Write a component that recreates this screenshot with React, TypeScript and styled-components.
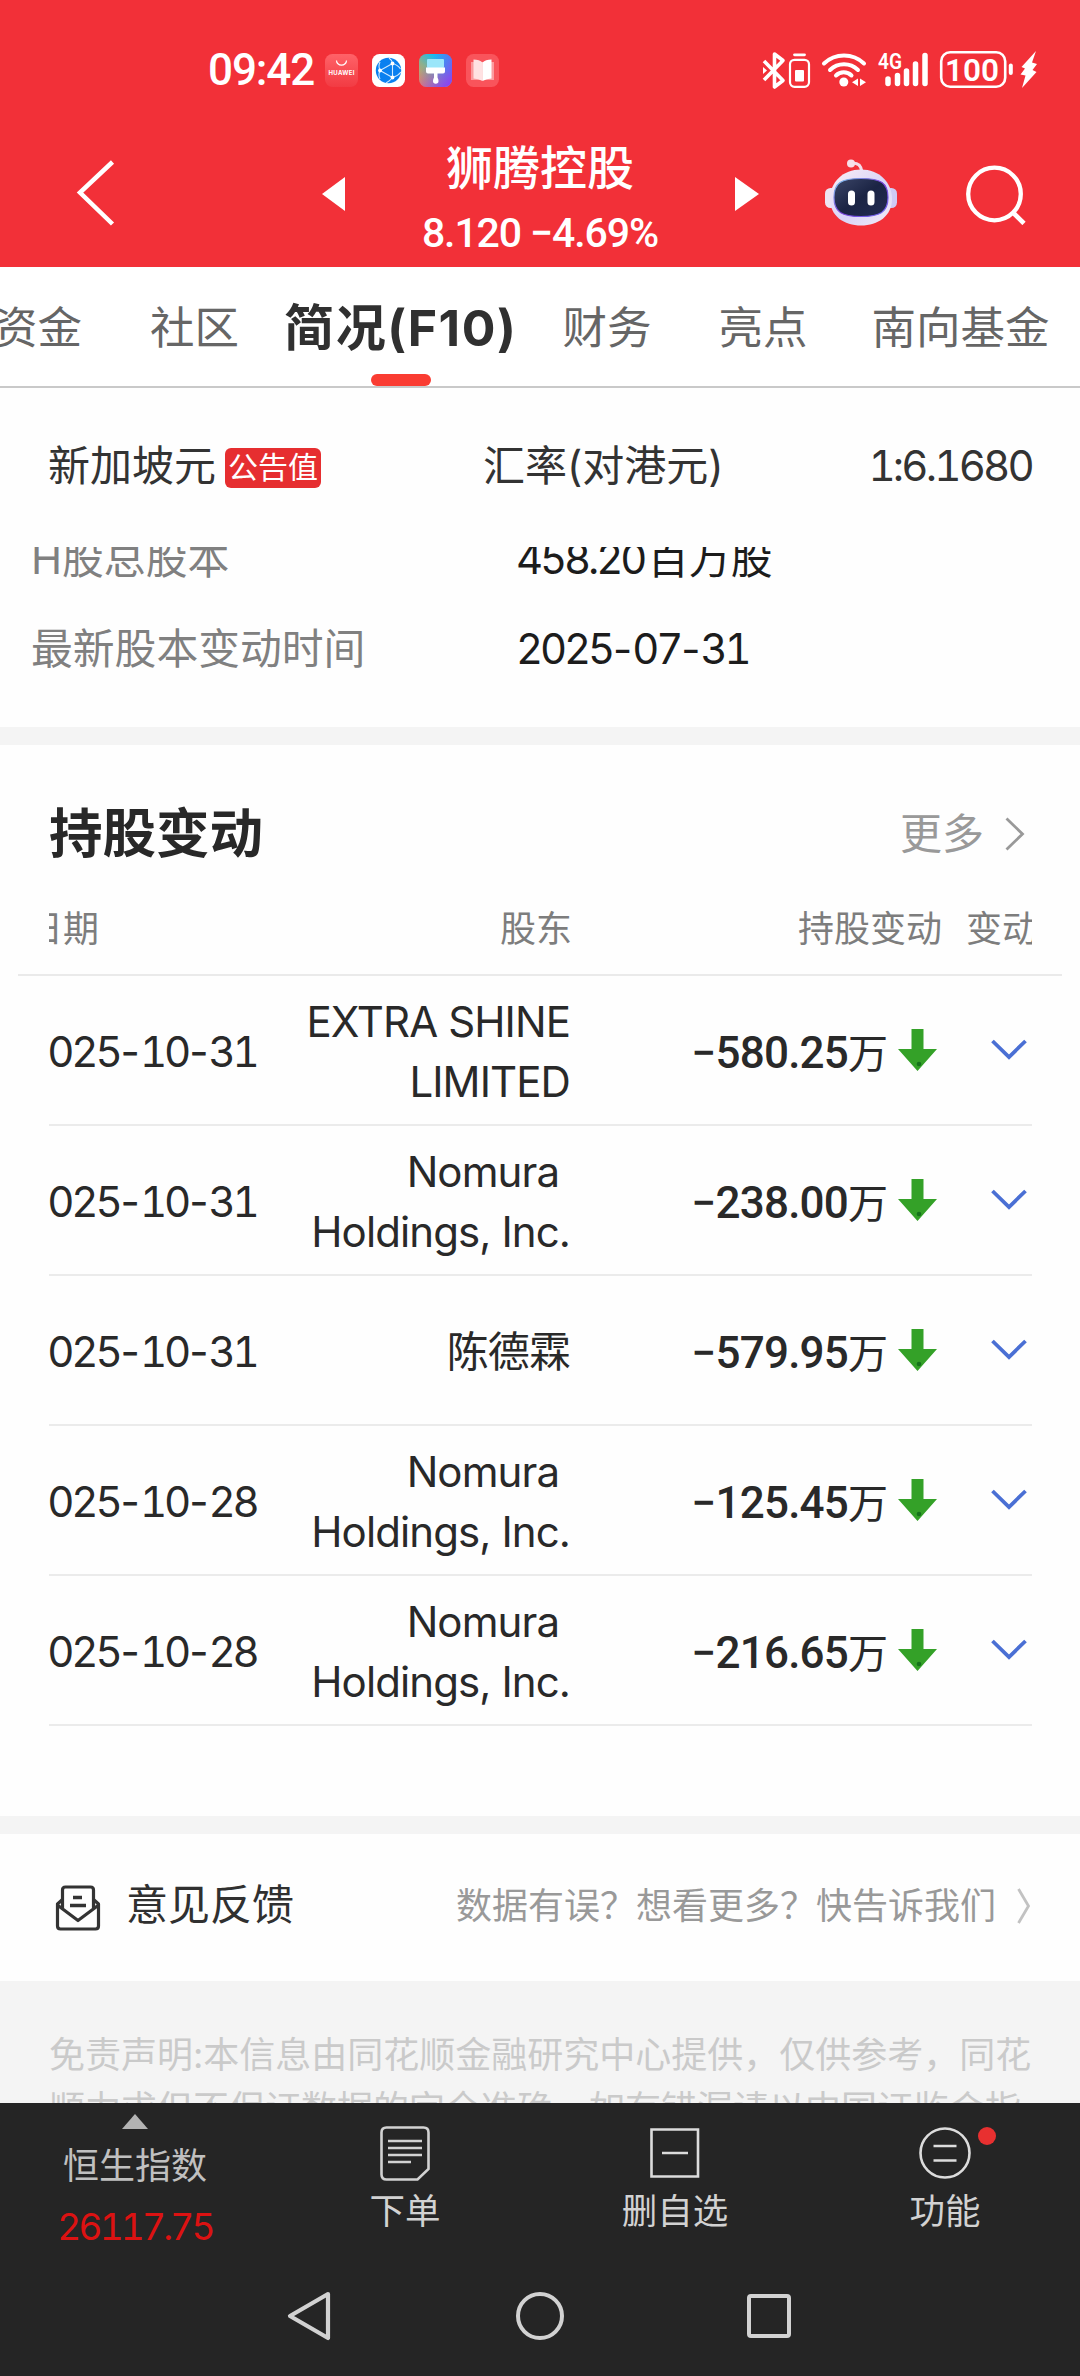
import React from "react";
import styled, { createGlobalStyle, css } from "styled-components";

const sans = `Inter, "Noto Sans CJK SC", sans-serif`;
const din = `Roboto, "Noto Sans CJK SC", sans-serif`;

const GlobalStyle = createGlobalStyle`
  * { box-sizing: border-box; }
  body { margin: 0; background: #fff; }
  svg { display: block; flex: none; }
`;

const Screen = styled.div`
  width: 1080px;
  height: 2376px;
  display: flex;
  flex-direction: column;
  overflow: hidden;
  background: #fefefe;
  font-family: ${sans};
  color: #2b2b2b;
  white-space: nowrap;
`;

/* Evenly spaced digits for dates, rates and amounts */
const Num = styled.span`
  font-variant-numeric: tabular-nums;
  letter-spacing: -3.1px;
`;
const Dash = styled.span`
  font-variant-numeric: normal;
  letter-spacing: 0;
  margin: 0 0 0 1px;
`;

/* ---------- status bar ---------- */
const StatusBar = styled.div`
  height: 120px;
  padding: 20px 42px 0 208px;
  display: flex;
  align-items: center;
  background: #f23038;
  color: #fff;
`;
const Clock = styled.span`
  width: 117px;
  font: 500 44px/48px ${din};
  letter-spacing: -1.1px;
`;
const AppIcons = styled.div`
  display: flex;
  gap: 14px;
`;
const StatusIcons = styled.div`
  margin-left: auto;
  display: flex;
`;

/* ---------- header ---------- */
const Header = styled.header`
  height: 147px;
  display: flex;
  align-items: center;
  background: #f23038;
  color: #fff;
`;
const HeaderIcon = styled.span<{ $gap: number }>`
  display: block;
  margin-left: ${(p) => p.$gap}px;
`;
const StockTitle = styled.div`
  width: 300px;
  margin-left: 45px;
  display: flex;
  flex-direction: column;
  align-items: center;
  gap: 8px;
  padding-bottom: 2px;
  padding-top: 13px;
`;
const StockName = styled.span`
  font: 500 47px/60px "Noto Sans CJK SC", sans-serif;
`;
const StockQuote = styled.span`
  font: 500 41px/60px ${din};
  letter-spacing: -1.1px;
`;

/* ---------- tabs ---------- */
const Tabs = styled.nav`
  height: 121px;
  display: flex;
  border-bottom: 2px solid #c9c9c9;
  background: #fff;
`;
const Tab = styled.div<{ $gap: number; $active?: boolean }>`
  position: relative;
  flex: none;
  margin-left: ${(p) => p.$gap}px;
  font-size: 44.5px;
  line-height: 122px;
  color: #666;
  ${(p) =>
    p.$active &&
    css`
      font-size: 50px;
      font-weight: 700;
      color: #303030;
      letter-spacing: 1.6px;
      &::after {
        content: "";
        position: absolute;
        left: calc(50% - 30px);
        bottom: 0;
        width: 60px;
        height: 12px;
        border-radius: 6px;
        background: #fa3c32;
      }
    `}
`;

/* ---------- currency row ---------- */
const CurrencyRow = styled.div`
  height: 159px;
  padding: 0 48px 4px;
  display: flex;
  align-items: center;
  font-size: 42px;
  line-height: 60px;
  color: #333;
`;
const CurrencyName = styled.div`
  width: 435px;
  display: flex;
  align-items: center;
  gap: 9px;
`;
const Badge = styled.span`
  height: 40px;
  padding: 0 3px;
  margin-top: 4px;
  border-radius: 6px;
  background: #e62e30;
  color: #fff;
  font-size: 30px;
  line-height: 38px;
`;
const Rate = styled(Num)`
  margin-left: auto;
  letter-spacing: -2.8px;
`;

/* ---------- share capital ---------- */
const Capital = styled.div`
  height: 180px;
  overflow: hidden;
`;
const CapitalRow = styled.div<{ $first?: boolean }>`
  height: 90px;
  margin-top: ${(p) => (p.$first ? -33 : 0)}px;
  padding-left: 31px;
  display: grid;
  grid-template-columns: 485px 1fr;
  align-items: center;
  font-size: 41.8px;
  line-height: 60px;
  color: #808080;
`;
const CapitalValue = styled.span`
  color: #1c1c1c;
`;
const ShareCount = styled(Num)`
  margin-right: 3px;
`;
const Divider = styled.div`
  flex: none;
  height: 18px;
  background: #f4f4f4;
`;

/* ---------- holdings ---------- */
const Holdings = styled.section`
  height: 1071px;
`;
const SectionHead = styled.div`
  height: 143px;
  padding: 35px 54px 0 49px;
  display: flex;
  align-items: center;
  justify-content: space-between;
`;
const SectionTitle = styled.h2`
  margin: 0;
  font-size: 53.5px;
  line-height: 60px;
  font-weight: 700;
  color: #282828;
`;
const More = styled.span`
  display: flex;
  align-items: center;
  gap: 20px;
  font-size: 42px;
  line-height: 60px;
  color: #999;
`;
const TableHead = styled.div`
  height: 88px;
  margin: 0 18px;
  padding: 0 30px 0 31px;
  border-bottom: 2px solid #eaeaea;
  color: #7d7d7d;
  font-size: 36px;
  line-height: 54px;
`;
const TableBody = styled.div`
  margin: 0 48px 0 49px;
`;
const Clip = styled.div`
  height: 100%;
  overflow: hidden;
`;
const Columns = styled.div`
  height: 100%;
  width: 1040px;
  margin-left: -22px;
  display: grid;
  grid-template-columns: 240px 303px 370px 1fr;
  align-items: center;
`;
const Row = styled.div`
  height: 150px;
  border-bottom: 2px solid #ebebeb;
  font-size: 42px;
  line-height: 60px;
  color: #292929;
`;
const HeadCell = styled.span<{ $align?: string }>`
  text-align: ${(p) => p.$align ?? "left"};
  padding-bottom: 4px;
  margin-right: -2px;
`;
const RatioHead = styled(HeadCell)`
  padding-left: 26px;
`;
const DateCell = styled(Num)`
  padding-top: 3px;
  margin-left: -4px;
`;
const HolderCell = styled.span`
  padding-top: 3px;
  text-align: right;
  white-space: pre;
  letter-spacing: -0.9px;
`;
const ChangeCell = styled.span`
  display: flex;
  align-items: center;
  justify-content: flex-end;
  gap: 10px;
  padding-right: 3px;
`;
const Amount = styled.span`
  padding-top: 7px;
  font-family: ${din};
`;
const Figure = styled.b`
  font-weight: 500;
  font-size: 44px;
  letter-spacing: -0.8px;
`;
const Unit = styled.span`
  font-size: 40px;
`;
const ExpandCell = styled.span`
  padding-left: 51px;
`;

/* ---------- feedback ---------- */
const Feedback = styled.div`
  height: 147px;
  padding: 0 48px 0 55px;
  display: flex;
  align-items: center;
  font-size: 42px;
  line-height: 60px;
  color: #303030;
`;
const FeedbackTitle = styled.span`
  margin: 0 0 5px 25px;
`;
const FeedbackHint = styled.span`
  margin: 0 0 4px auto;
  display: flex;
  align-items: center;
  gap: 20px;
  font-size: 36px;
  color: #999;
`;
const Disclaimer = styled.p`
  flex: 1;
  min-height: 0;
  margin: 0;
  padding: 47px 49px 0;
  overflow: hidden;
  background: #f4f4f4;
  color: #cacaca;
  font-size: 36px;
  line-height: 54px;
`;

/* ---------- bottom bars ---------- */
const BottomBar = styled.div`
  height: 153px;
  flex: none;
  display: grid;
  grid-template-columns: repeat(4, 270px);
  background: #252525;
  color: #d2d2d2;
  font-size: 35.5px;
  line-height: 44px;
`;
const IndexItem = styled.div`
  display: flex;
  flex-direction: column;
  align-items: center;
  padding-top: 11px;
  color: #c0c0c0;
`;
const IndexName = styled.span`
  margin-top: 15px;
  font-size: 36px;
`;
const IndexValue = styled(Num)`
  margin-top: 17px;
  color: #dc1212;
  font-size: 37px;
  letter-spacing: -2.8px;
`;
const Action = styled.div`
  position: relative;
  display: flex;
  flex-direction: column;
  align-items: center;
  padding-top: 20px;
`;
const ActionLabel = styled.span`
  margin-top: 7px;
`;
const Dot = styled.i`
  position: absolute;
  left: 168px;
  top: 24px;
  width: 18px;
  height: 18px;
  border-radius: 50%;
  background: #e83030;
`;
const SystemNav = styled.div`
  height: 120px;
  flex: none;
  display: flex;
  justify-content: center;
  align-items: center;
  gap: 180px;
  background: #252525;
`;

const GalleryIcon = () => (
  <svg width="33" height="33" viewBox="0 0 33 33">
    <defs>
      <linearGradient id="hw" x1="0" y1="0" x2="0" y2="1">
        <stop offset="0" stopColor="#ff6268" />
        <stop offset="1" stopColor="#f23b43" />
      </linearGradient>
    </defs>
    <rect width="33" height="33" rx="7.5" fill="url(#hw)" />
    <path d="M11.5 6.5a5 4.6 0 0 0 10 0" fill="none" stroke="#fff" strokeWidth="1.2" />
    <text x="16.5" y="21" fontSize="6" fontWeight="700" fontFamily="Inter, sans-serif" fill="#fff" textAnchor="middle" textLength="26">HUAWEI</text>
  </svg>
);
const GlobeIcon = () => (
  <svg width="33" height="33" viewBox="0 0 33 33">
    <rect width="33" height="33" rx="7.5" fill="#fff" />
    <circle cx="16.5" cy="16.5" r="12.7" fill="#0a80f0" />
    <g fill="none" stroke="#cfe8ff" strokeWidth="1.1">
      <path d="M8 16.5 20.5 9.5M8 16.5 20.5 23.5M20.5 9.5V23.5" />
      <path d="M20.5 9.5Q20 6 17 4M20.5 9.5Q26 11 28.5 15M8 16.5Q6 12 8 8M8 16.5Q6 21 8 25M20.5 23.5Q18 27 14 29M20.5 23.5Q26 22 29 18" />
    </g>
    <circle cx="8" cy="16.5" r="1.9" fill="#fff" />
    <circle cx="20.5" cy="9.5" r="1.9" fill="#fff" />
    <circle cx="20.5" cy="23.5" r="1.9" fill="#fff" />
  </svg>
);
const ThemeIcon = () => (
  <svg width="33" height="33" viewBox="0 0 33 33">
    <defs>
      <linearGradient id="th1" x1="0" y1="1" x2="1" y2="0">
        <stop offset="0" stopColor="#ff8a50" />
        <stop offset="0.4" stopColor="#8bb08e" />
        <stop offset="0.7" stopColor="#15bdf2" />
        <stop offset="1" stopColor="#2aa0f8" />
      </linearGradient>
      <linearGradient id="th2" x1="0.3" y1="0.2" x2="1" y2="0.8">
        <stop offset="0" stopColor="#9040f0" stopOpacity="0" />
        <stop offset="1" stopColor="#8a45f0" />
      </linearGradient>
    </defs>
    <rect width="33" height="33" rx="7.5" fill="url(#th1)" />
    <rect width="33" height="33" rx="7.5" fill="url(#th2)" />
    <rect x="8" y="5" width="17" height="9" rx="1" fill="#9be6fa" />
    <path d="M7 13.5h19v4q0 2-2 2h-5.500v4q1 1.500 1 3.500a2.500 2.500 0 0 1-5.500 0q0-2 1-3.500v-4H9q-2 0-2-2z" fill="#fff" />
  </svg>
);
const BookIcon = () => (
  <svg width="33" height="33" viewBox="0 0 33 33">
    <rect width="33" height="33" rx="7.500" fill="#f9545b" />
    <path d="M5 8h23v18H5z" fill="#fb9a9e" />
    <path d="M7.500 5.500q6 0 9 3v18.500q-4-2.500-9-2.500z" fill="#ffe1e2" />
    <path d="M25.500 5.500q-6 0-9 3v18.500q4-2.500 9-2.500z" fill="#fff" />
  </svg>
);

const StatusGlyphs = () => (
  <svg width="277" height="40" viewBox="760 49 277 40" fill="none" stroke="#fff">
    <path d="M763 60 782 79.500 773.500 86V53l8.500 6.500L763 79" strokeWidth="3.600" strokeLinejoin="round" />
    <path d="M762 66l4 3.500-4 3.500z" fill="#fff" stroke="none" />
    <path d="M793.500 53.800h10" strokeWidth="2.800" strokeLinecap="round" />
    <rect x="789" y="58.800" width="19" height="27" rx="4.500" strokeWidth="2.200" />
    <rect x="794" y="69" width="9" height="11.500" rx="1" fill="#fff" stroke="none" />
    <g strokeWidth="4" strokeLinecap="round">
      <path d="M823 62.500a29 29 0 0 1 40 0" />
      <path d="M829 69a20 20 0 0 1 28 0" />
      <path d="M835 74.500a11 11 0 0 1 15.500 0" />
    </g>
    <circle cx="842.800" cy="81" r="4.500" fill="#fff" stroke="none" />
    <path d="M857 77.500v7.500l-6-3.700zM859 77.500v7.500l6-3.700z" fill="#fff" stroke="none" />
    <text x="877" y="68" fontSize="22" fontWeight="600" fontFamily="Roboto, sans-serif" fill="#fff" stroke="none" textLength="24" lengthAdjust="spacingAndGlyphs">4G</text>
    <g strokeWidth="5.500" strokeLinecap="round">
      <path d="M887 78v4.500M896.500 74.500v8M905.500 70v12.500M914.500 63v19.500M924 54.500v28" />
    </g>
    <rect x="940.200" y="51.200" width="64" height="34.600" rx="9" strokeWidth="2.600" />
    <text x="944" y="80" fontSize="32" fontWeight="600" fontFamily="Roboto, sans-serif" fill="#fff" stroke="none" textLength="54" lengthAdjust="spacingAndGlyphs">100</text>
    <path d="M1009.800 64.500v7.500" strokeWidth="4" strokeLinecap="round" />
    <path d="M1035 50 1020.500 66l3.500 1.500-4.500 6 5 1-3.500 12.500L1035.500 71l-4-2 4.500-6-5-1.500z" fill="#fff" stroke="none" />
  </svg>
);

const Robot = () => (
  <svg width="78" height="72" viewBox="0 0 78 72">
    <defs>
      <linearGradient id="shell" x1="0" y1="0" x2="1" y2="1">
        <stop offset="0" stopColor="#fbeef4" />
        <stop offset="0.55" stopColor="#d9d4f8" />
        <stop offset="1" stopColor="#f3edf7" />
      </linearGradient>
      <linearGradient id="rim" x1="0" y1="0" x2="1" y2="1">
        <stop offset="0" stopColor="#7fd0ee" />
        <stop offset="0.5" stopColor="#7a3fd8" />
        <stop offset="1" stopColor="#6d6cf0" />
      </linearGradient>
      <linearGradient id="visor" x1="0" y1="0" x2="1" y2="1">
        <stop offset="0" stopColor="#3c4668" />
        <stop offset="0.5" stopColor="#1b2444" />
        <stop offset="1" stopColor="#222b52" />
      </linearGradient>
    </defs>
    <path d="M29 5q10-1 11 9" fill="none" stroke="#f4dbe8" strokeWidth="3" />
    <circle cx="29" cy="5.500" r="4" fill="#f7dfe9" />
    <rect x="3" y="30" width="12" height="20" rx="5.500" fill="#eee4f2" />
    <rect x="63" y="30" width="12" height="20" rx="5.500" fill="#cfcaf5" />
    <path d="M39 11.500C57 11.500 70 24 70 41C70 58 56 67.500 39 67.500S8 58 8 41C8 24 21 11.500 39 11.500z" fill="url(#shell)" />
    <path d="M39 20.500C59 20.500 66 25 66 39.500C66 54 58 58.500 39 58.500S12 54 12 39.500C12 25 19 20.500 39 20.500z" fill="url(#visor)" stroke="url(#rim)" strokeWidth="1.200" />
    <rect x="26" y="32.500" width="7" height="15" rx="3.500" fill="#fff" />
    <rect x="45.500" y="32.500" width="7" height="15" rx="3.500" fill="#fff" />
  </svg>
);

const FallArrow = () => (
  <svg width="39" height="42" viewBox="0 0 39 42">
    <path d="M13.500 0h12v20H39L19.500 42 0 20h13.500z" fill="#34a128" />
    <circle cx="21" cy="35" r="2.300" fill="#14721a" />
  </svg>
);
const Expand = () => (
  <svg width="36" height="22" viewBox="0 0 36 22">
    <path d="M1.500 2 18 18 34.500 2" fill="none" stroke="#4a6fd4" strokeWidth="3.800" />
  </svg>
);
const Envelope = () => (
  <svg width="46" height="46" viewBox="0 0 46 46" fill="none" stroke="#333" strokeWidth="3.200" strokeLinejoin="round">
    <path d="M7.500 23V5q0-3 3-3h25q3 0 3 3v18" />
    <path d="M7.500 14.500 2.500 19v22q0 3 3 3h35q3 0 3-3V19l-5-4.500" />
    <path d="M3 20.500 23 35.500 43 20.500" />
    <path d="M18 12.500h9M15 20.500h16" strokeWidth="3.600" />
  </svg>
);

/* A date whose dashes keep their own width between the tabular digits */
const DateText = ({ value }: { value: string }) => (
  <>
    {value.split("-").map((part, i) => (
      <React.Fragment key={i}>
        {i > 0 && <Dash>-</Dash>}
        {part}
      </React.Fragment>
    ))}
  </>
);

const tabs = [
  { label: "资金", gap: -7 },
  { label: "社区", gap: 68 },
  { label: "简况(F10)", gap: 45, active: true },
  { label: "财务", gap: 45 },
  { label: "亮点", gap: 67 },
  { label: "南向基金", gap: 64 },
];

const changes = [
  { date: "2025-10-31", holder: "EXTRA SHINE\nLIMITED", amount: "−580.25" },
  { date: "2025-10-31", holder: "Nomura \nHoldings, Inc.", amount: "−238.00" },
  { date: "2025-10-31", holder: "陈德霖", amount: "−579.95" },
  { date: "2025-10-28", holder: "Nomura \nHoldings, Inc.", amount: "−125.45" },
  { date: "2025-10-28", holder: "Nomura \nHoldings, Inc.", amount: "−216.65" },
];

export default function App() {
  return (
    <Screen>
      <GlobalStyle />
      <StatusBar>
        <Clock>09:42</Clock>
        <AppIcons>
          <GalleryIcon />
          <GlobeIcon />
          <ThemeIcon />
          <BookIcon />
        </AppIcons>
        <StatusIcons>
          <StatusGlyphs />
        </StatusIcons>
      </StatusBar>

      <Header>
        <HeaderIcon $gap={73}>
          <svg width="48" height="68" viewBox="0 0 48 68">
            <path d="M39.500 2 7 32.500 39.500 64" fill="none" stroke="#fff" strokeWidth="4.500" />
          </svg>
        </HeaderIcon>
        <HeaderIcon $gap={201}>
          <svg width="23" height="34" viewBox="0 0 23 34">
            <path d="M23 0v34L0 17z" fill="#fff" />
          </svg>
        </HeaderIcon>
        <StockTitle>
          <StockName>狮腾控股</StockName>
          <StockQuote>8.120 −4.69%</StockQuote>
        </StockTitle>
        <HeaderIcon $gap={45}>
          <svg width="24" height="34" viewBox="0 0 24 34">
            <path d="M0 0v34l24-17z" fill="#fff" />
          </svg>
        </HeaderIcon>
        <HeaderIcon $gap={63}>
          <Robot />
        </HeaderIcon>
        <HeaderIcon $gap={63}>
          <svg width="66" height="62" viewBox="0 0 66 62" fill="none" stroke="#fff">
            <circle cx="31.500" cy="31" r="26.300" strokeWidth="4.300" />
            <path d="M50 49.500 61 60.500" strokeWidth="4.600" />
          </svg>
        </HeaderIcon>
      </Header>

      <Tabs>
        {tabs.map((t) => (
          <Tab key={t.label} $gap={t.gap} $active={t.active}>
            {t.label}
          </Tab>
        ))}
      </Tabs>

      <CurrencyRow>
        <CurrencyName>
          新加坡元
          <Badge>公告值</Badge>
        </CurrencyName>
        <span>汇率(对港元)</span>
        <Rate>1:6.1680</Rate>
      </CurrencyRow>

      <Capital>
        <CapitalRow $first>
          <span>H股总股本</span>
          <CapitalValue>
            <ShareCount>458.20</ShareCount>百万股
          </CapitalValue>
        </CapitalRow>
        <CapitalRow>
          <span>最新股本变动时间</span>
          <CapitalValue>
            <Num>
              <DateText value="2025-07-31" />
            </Num>
          </CapitalValue>
        </CapitalRow>
      </Capital>
      <Divider />

      <Holdings>
        <SectionHead>
          <SectionTitle>持股变动</SectionTitle>
          <More>
            更多
            <svg width="22" height="36" viewBox="0 0 22 36">
              <path d="M2.500 2.500 18.500 18 2.500 33.500" fill="none" stroke="#999" strokeWidth="2.800" />
            </svg>
          </More>
        </SectionHead>
        <TableHead>
          <Clip>
            <Columns>
              <HeadCell>日期</HeadCell>
              <HeadCell $align="right">股东</HeadCell>
              <HeadCell $align="right">持股变动</HeadCell>
              <RatioHead>变动</RatioHead>
            </Columns>
          </Clip>
        </TableHead>
        <TableBody>
          {changes.map((c, i) => (
            <Row key={i}>
              <Clip>
                <Columns>
                  <DateCell>
                    <DateText value={c.date} />
                  </DateCell>
                  <HolderCell>{c.holder}</HolderCell>
                  <ChangeCell>
                    <Amount>
                      <Figure>{c.amount}</Figure>
                      <Unit>万</Unit>
                    </Amount>
                    <FallArrow />
                  </ChangeCell>
                  <ExpandCell>
                    <Expand />
                  </ExpandCell>
                </Columns>
              </Clip>
            </Row>
          ))}
        </TableBody>
      </Holdings>
      <Divider />

      <Feedback>
        <Envelope />
        <FeedbackTitle>意见反馈</FeedbackTitle>
        <FeedbackHint>
          数据有误？想看更多？快告诉我们
          <svg width="16" height="38" viewBox="0 0 16 38">
            <path d="M2.500 2 12.500 19 2.500 36" fill="none" stroke="#c2c2c2" strokeWidth="2.800" />
          </svg>
        </FeedbackHint>
      </Feedback>
      <Disclaimer>
        免责声明:本信息由同花顺金融研究中心提供，仅供参考，同花
        <br />
        顺力求但不保证数据的完全准确，如有错漏请以中国证监会指
      </Disclaimer>

      <BottomBar>
        <IndexItem>
          <svg width="26" height="15" viewBox="0 0 26 15">
            <path d="M13 0 26 15H0z" fill="#b3b3b3" />
          </svg>
          <IndexName>恒生指数</IndexName>
          <IndexValue>26117.75</IndexValue>
        </IndexItem>
        <Action>
          <svg width="54" height="60" viewBox="0 0 54 60" fill="none" stroke="#d2d2d2" strokeWidth="2.600">
            <path d="M8.500 4.500h37q5 0 5 5v36.500L39.500 56.500h-31q-5 0-5-5v-42q0-5 5-5z" />
            <path d="M10 18h34M10 25h34M10 32h34M10 39h23" />
          </svg>
          <ActionLabel>下单</ActionLabel>
        </Action>
        <Action>
          <svg width="54" height="60" viewBox="0 0 54 60" fill="none" stroke="#dcdcdc" strokeWidth="2.600">
            <path d="M3.500 6.500h46.500v47H3.500zM14 30h26" />
          </svg>
          <ActionLabel>删自选</ActionLabel>
        </Action>
        <Action>
          <svg width="54" height="60" viewBox="0 0 54 60" fill="none" stroke="#dcdcdc" strokeWidth="2.600">
            <circle cx="27" cy="30" r="24.500" />
            <path d="M15.500 23h23M15.500 37.500h23" />
          </svg>
          <Dot />
          <ActionLabel>功能</ActionLabel>
        </Action>
      </BottomBar>
      <SystemNav>
        <svg width="50" height="50" viewBox="0 0 50 50">
          <path d="M43 3 5 25 43 47z" fill="none" stroke="#d2d2d2" strokeWidth="4.200" strokeLinejoin="round" />
        </svg>
        <svg width="50" height="50" viewBox="0 0 50 50">
          <circle cx="25" cy="25" r="22" fill="none" stroke="#d2d2d2" strokeWidth="4" />
        </svg>
        <svg width="50" height="50" viewBox="0 0 50 50">
          <rect x="4" y="5" width="40" height="40" rx="2" fill="none" stroke="#d2d2d2" strokeWidth="4" />
        </svg>
      </SystemNav>
    </Screen>
  );
}
